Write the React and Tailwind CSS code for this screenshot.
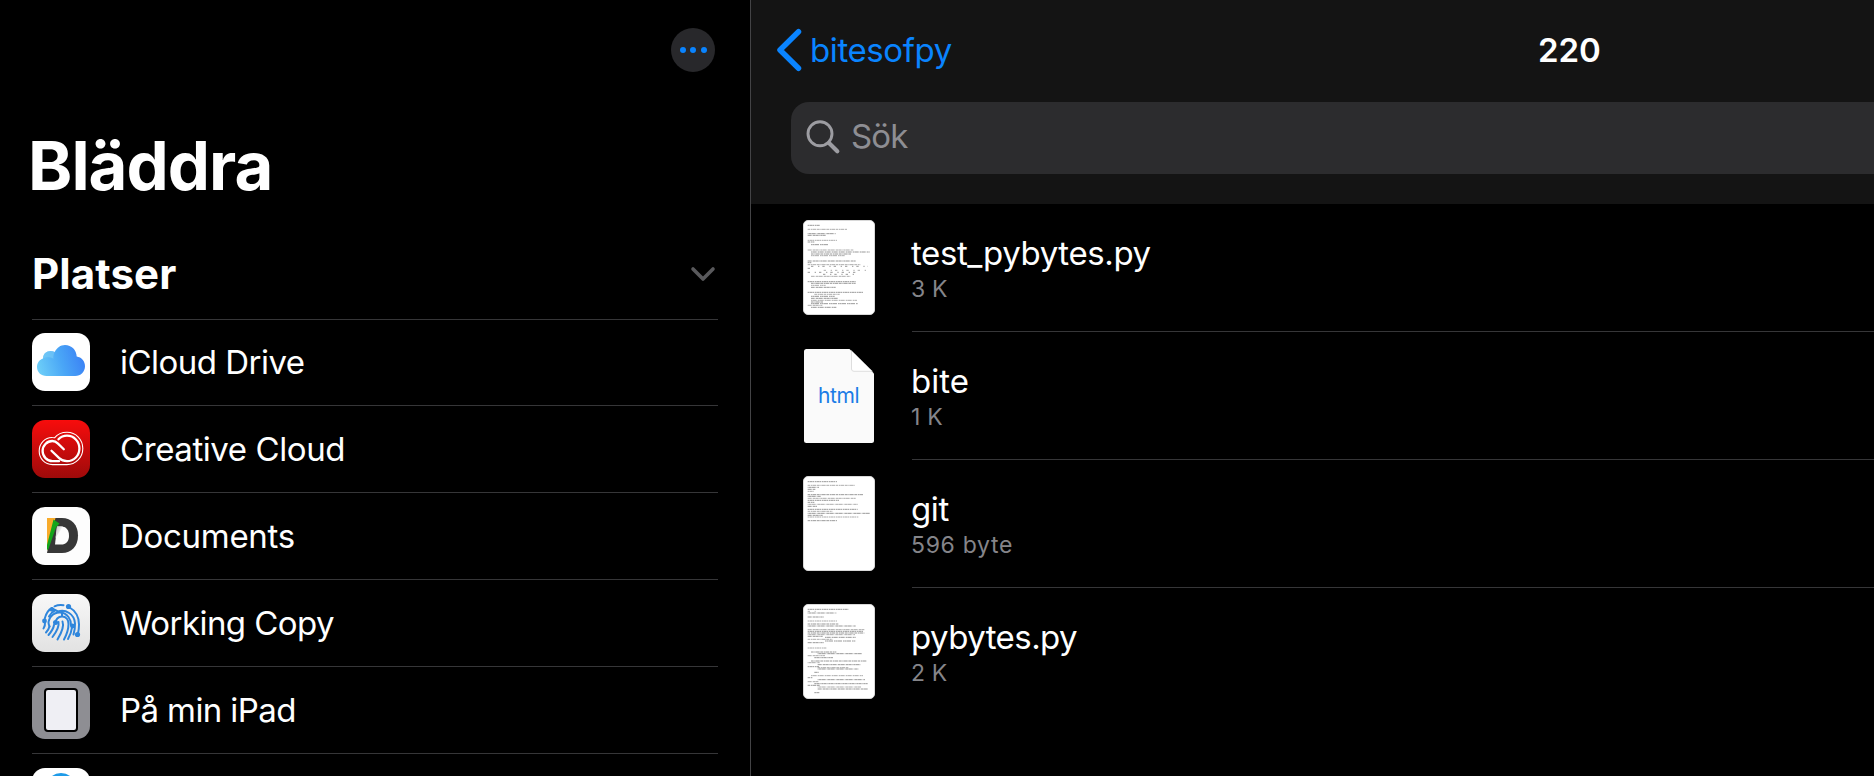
import React from 'react';

/* ---------- location icons (58 x 58) ---------- */

const ICloudIcon = () => (
  <svg viewBox="0 0 58 58" className="size-[58px]">
    <defs>
      <linearGradient id="cloud" x1="0" y1="0.6" x2="1" y2="0.4">
        <stop offset="0" stopColor="#6ccdf8" />
        <stop offset="0.5" stopColor="#4aa6f6" />
        <stop offset="1" stopColor="#3a80f5" />
      </linearGradient>
    </defs>
    <path
      d="M14.5 43C9 43 5 39 5 34c0-4.300 2.700-7.600 6-8.600C11 21 14.500 18 18.500 18c1.600 0 3 .4 4.200 1.100C24.700 14.800 28.500 12 33 12c6.500 0 11.500 5 11.700 11.600C49.500 24.300 53 28.300 53 33.200 53 38.700 48.700 43 43.200 43z"
      fill="url(#cloud)"
    />
    <path d="M11 25.400C11 21 14.500 18 18.500 18c1.600 0 3 .4 4.200 1.100-1 2-1.500 4.200-1.300 6.600-3.400-1.800-7-1.800-10.400-.3z" fill="#7fd0f5" opacity="0.5" />
  </svg>
);

const CreativeCloudIcon = () => (
  <svg viewBox="0 0 58 58" className="size-[58px]" fill="none" stroke="#fff" strokeLinecap="round" strokeLinejoin="round">
    <path
      d="M22.500 17.800C25.500 14.200 30 12.300 35 12.300 44 12.300 50.800 19.500 50.800 28.500S43.700 44.600 34.800 44.600H20.500C12.800 44.600 7.200 38.600 7.200 31 7.200 23.400 13 17.300 20.300 17.500c.8 0 1.500.1 2.200.3z"
      strokeWidth="1.100"
    />
    <path d="M26.500 19.300C28.800 16.900 31.700 15.700 35 15.700c7 0 12.400 5.700 12.400 12.800S42 41.200 35 41.200c-3.200 0-5.700-1-7.800-3L19.500 30.700" strokeWidth="2.300" />
    <path d="M31.800 29.300 26 23.600C24.300 21.900 22.500 21 20.300 21 15 21 10.600 25.500 10.600 31S15 41.200 20.500 41.200H27" strokeWidth="2.300" />
  </svg>
);

const DocumentsIcon = () => (
  <svg viewBox="0 0 58 58" className="size-[58px]">
    <defs>
      <linearGradient id="fold" x1="0" y1="0" x2="1" y2="0.6">
        <stop offset="0" stopColor="#bdbdbd" />
        <stop offset="0.8" stopColor="#fdfdfd" />
      </linearGradient>
    </defs>
    <path d="M22 11h8c9.500 0 16 6.600 16 17.500S39.500 46 30 46H15z" fill="#373737" />
    <path d="M25 19.500h4c5 0 8 3.300 8 9.200 0 5.700-3 8.800-8 8.800h-6z" fill="#fdfdfd" />
    <path d="M25 19.500h6L23.500 31z" fill="url(#fold)" />
    <path d="M15 11h8.500L17 36l-2 8z" fill="#f8ab2b" />
    <path d="M21.500 12.500 27.500 16.500 24 20.500 16.500 42 15 43V38z" fill="#14a51b" />
  </svg>
);

const WorkingCopyIcon = () => (
  <svg viewBox="0 0 58 58" className="size-[58px]" fill="none" stroke="#2f86dc" strokeWidth="2" strokeLinecap="round">
    <path d="M12.800 24.500C14 19.500 16.800 15.700 20 14M22.500 12.300C25.500 11 28.500 10.700 31.500 11.200" />
    <path d="M37 13C43 16.500 47 22.500 47 30.500c0 3-.3 6-1 9" />
    <path d="M20 14.500 26 17.500C33.500 15 42.500 20 43 29.500c.1 3.500-.3 7-1.500 11" />
    <path d="M17 22.500c1.300-2.800 3-4.600 5.500-5.700M17.500 32.500c-1.500-3-.8-7 1.500-10 4.500-5.500 13-5.500 17.500.5 2 2.700 2.600 5.500 2.500 8.500" />
    <path d="M30 17v5M23.500 29.500c-.3-4 2.800-7 6.500-7 4 0 6.500 3.200 6.500 7.500 0 5-1.500 10-4.500 15.500" />
    <path d="M30.500 27.500c1.800 4.500-.5 10.500-5 18M26.500 28c1 5-1.800 9.500-6 15" />
    <path d="M13 28c.2 2.500 0 4.500-1.500 6.500M17.500 32.500c-.5 2-1.700 4-3.500 6M22 31c-.5 3.500-2.500 6.500-5.500 10M40 33.500c-.5 4-1.700 7.500-4 11.500" />
    <g fill="#2f86dc" stroke="none">
      <circle cx="36.500" cy="12.500" r="2.600" />
      <circle cx="12.500" cy="27" r="2.400" />
      <circle cx="20" cy="15.500" r="2.300" />
      <circle cx="23.500" cy="28.500" r="2.500" />
      <circle cx="40.500" cy="32" r="2.400" />
      <circle cx="45.500" cy="40.500" r="2.600" />
    </g>
  </svg>
);

const IPadIcon = () => (
  <span className="h-[44px] w-[34px] rounded-[4px] border-2 border-black bg-[#efeff4]" />
);

const BlueDotIcon = () => <span className="mb-[18px] size-[30px] rounded-full bg-[#1e9be8]" />;

const locations = [
  { name: 'iCloud Drive', Icon: ICloudIcon, tile: 'bg-white', track: 'tracking-[-0.52px]' },
  { name: 'Creative Cloud', Icon: CreativeCloudIcon, tile: 'bg-linear-to-b from-[#f80c0c] to-[#9e0a0a]', track: 'tracking-[-0.42px]' },
  { name: 'Documents', Icon: DocumentsIcon, tile: 'bg-[#fdfdfd]', track: 'tracking-[-0.3px]' },
  { name: 'Working Copy', Icon: WorkingCopyIcon, tile: 'bg-linear-to-b from-[#f8f8f8] to-[#e2e2e2]', track: 'tracking-[-0.55px]' },
  { name: 'På min iPad', Icon: IPadIcon, tile: 'bg-[#8e8e93]', track: 'tracking-[-0.6px]' },
  { name: '', Icon: BlueDotIcon, tile: 'bg-white', track: '' },
];

/* ---------- file thumbnails: [y, x1, x2, sparse] in thirds of a pixel ---------- */

const testLines = [
  [16, 14, 50], [28, 14, 132], [41, 14, 98], [46, 14, 68], [61, 14, 102], [66, 14, 34], [74, 24, 75],
  [90, 14, 152], [96, 24, 200], [102, 24, 145], [107, 24, 125], [123, 14, 158], [128, 14, 25],
  [134, 14, 172], [139, 24, 195, 1], [145, 14, 28, 1], [151, 62, 195, 1], [157, 14, 160, 1], [163, 60, 155, 1], [169, 24, 142],
  [185, 14, 158], [190, 24, 158], [196, 24, 68], [202, 24, 98], [217, 14, 180], [223, 34, 110], [229, 24, 95],
  [235, 24, 105], [241, 24, 162], [246, 24, 60], [251, 24, 165], [256, 14, 58], [262, 24, 100],
];
const gitLines = [
  [17, 14, 102], [28, 14, 156], [34, 14, 48], [40, 14, 38], [46, 14, 32], [56, 14, 180], [61, 14, 54], [67, 14, 158],
  [73, 14, 108], [79, 14, 34], [85, 14, 164], [91, 14, 42], [100, 14, 164], [106, 14, 88], [112, 14, 202], [118, 14, 60],
  [123, 14, 166], [134, 14, 102],
];
const pyLines = [
  [16, 14, 136], [22, 14, 38, 1], [27, 14, 100], [39, 14, 62], [51, 14, 102], [60, 14, 108], [66, 14, 158],
  [77, 14, 184], [82, 14, 182], [87, 14, 184], [92, 14, 156], [97, 14, 60], [100, 66, 158], [106, 14, 88], [111, 66, 158], [116, 14, 62],
  [132, 14, 70], [144, 24, 100], [149, 44, 178], [155, 14, 66], [161, 34, 90], [171, 24, 190], [176, 14, 50], [182, 44, 172],
  [188, 14, 48], [191, 44, 138], [195, 44, 166], [205, 34, 48], [215, 24, 180], [221, 14, 28], [227, 44, 186], [233, 14, 46],
  [239, 34, 194], [244, 14, 52], [249, 44, 174], [255, 44, 196], [266, 34, 50],
];

const dashes = ['5 1 9 1 3 2', '8 2 4 1 11 2', '3 1 6 1 13 3', '10 1 2 2 7 1'];

const TextThumb = ({ lines }) => (
  <div className="mt-4 h-[95px] w-[72px] shrink-0 rounded-[5px] border border-[#d8d8d8] bg-white">
    <svg viewBox="3 3 210 279" className="h-[93px] w-[70px]">
      {lines.map(([y, x1, x2, sparse], i) => (
        <line
          key={i}
          x1={x1}
          x2={x2}
          y1={y}
          y2={y}
          stroke={i % 3 === 1 ? '#777' : '#555'}
          strokeWidth="1.8"
          strokeDasharray={sparse ? '7 14 4 9' : dashes[i % 4]}
        />
      ))}
    </svg>
  </div>
);

const HtmlThumb = () => (
  <div className="mt-[17px] grid h-[94px] w-[72px] shrink-0 place-items-center">
    <svg viewBox="0 0 70 94" className="col-start-1 row-start-1 h-[94px] w-[70px]">
      <path d="M2.500 0H45.500L70 24.500V91.500Q70 94 67.500 94H2.500Q0 94 0 91.500V2.500Q0 0 2.500 0z" fill="#fafafa" />
      <path d="M47.500 1.500V20Q47.500 22.300 50 22.300H68.500" fill="#fff" stroke="#d6d6d6" strokeWidth="0.8" />
    </svg>
    <span className="col-start-1 row-start-1 -ml-px text-[21px] leading-[26px] tracking-[-0.4px] text-[#1a7ce6]">html</span>
  </div>
);

const files = [
  { name: 'test_pybytes.py', size: '3 K', thumb: <TextThumb lines={testLines} />, track: 'tracking-[-0.4px]', sub: 'tracking-[0.1px]' },
  { name: 'bite', size: '1 K', thumb: <HtmlThumb />, track: 'tracking-normal', sub: 'tracking-[0.2px]' },
  { name: 'git', size: '596 byte', thumb: <TextThumb lines={gitLines} />, track: 'tracking-[-0.4px]', sub: 'tracking-[0.68px]' },
  { name: 'pybytes.py', size: '2 K', thumb: <TextThumb lines={pyLines} />, track: 'tracking-[-0.55px]', sub: 'tracking-[0.1px]' },
];

/* ---------- panels ---------- */

const Sidebar = () => (
  <aside className="w-[751px] shrink-0 border-r border-[#434345] pr-8 pl-8">
    <div className="flex h-[126px] items-start justify-end pt-7 pr-[3px]">
      <button className="flex size-11 items-center justify-center gap-[4.5px] rounded-full bg-[#28282b]">
        <span className="size-[6px] rounded-full bg-[#0a84ff]" />
        <span className="size-[6px] rounded-full bg-[#0a84ff]" />
        <span className="size-[6px] rounded-full bg-[#0a84ff]" />
      </button>
    </div>
    <h1 className="-ml-1 h-20 text-[67px] leading-[79px] font-bold tracking-[-0.95px]">Bläddra</h1>
    <div className="flex h-[114px] items-center justify-between border-b border-[#363638] pt-[22px]">
      <h2 className="text-[42px] leading-[50px] font-bold tracking-[0.1px]">Platser</h2>
      <svg viewBox="0 0 26 16" className="mr-[2px] h-4 w-[26px]" fill="none" stroke="#59595c" strokeWidth="3.600" strokeLinecap="round" strokeLinejoin="round">
        <path d="M3 3 13 13 23 3" />
      </svg>
    </div>
    <ul className="-mt-px">
      {locations.map(({ name, Icon, tile, track }, i) => (
        <li key={i} className="flex h-[87px] items-center gap-[30px] border-b border-[#363638]">
          <span className={`flex size-[58px] shrink-0 items-center justify-center overflow-hidden rounded-[13px] ${tile}`}>
            <Icon />
          </span>
          <span className={`text-[33px] leading-10 ${track}`}>{name}</span>
        </li>
      ))}
    </ul>
  </aside>
);

const Browser = () => (
  <main className="min-w-0 grow">
    <header className="h-[204px] bg-[#141414]">
      <div className="grid h-[102px] grid-cols-[766px_1fr] pb-[2px]">
        <button className="flex items-center self-center pl-[25px] text-[#0a84ff]">
          <svg viewBox="0 0 26 44" className="h-11 w-[26px]" fill="none" stroke="currentColor" strokeWidth="5.500" strokeLinecap="round" strokeLinejoin="round">
            <path d="M22.500 3.700 4 22 22.500 40.300" />
          </svg>
          <span className="ml-[8px] text-[33px] leading-10 tracking-[-0.4px]">bitesofpy</span>
        </button>
        <h3 className="self-center pl-[21px] text-[33px] leading-10 font-semibold">220</h3>
      </div>
      <div className="ml-10 flex h-[72px] items-center rounded-l-[18px] bg-[#2c2c2e] pl-[14px] text-[#8e8e93]">
        <svg viewBox="0 0 36 36" className="size-9" fill="none" stroke="#9d9da2" strokeLinecap="round">
          <circle cx="15" cy="13.700" r="12" strokeWidth="2.900" />
          <path d="M24 23 32.300 31.200" strokeWidth="4.200" />
        </svg>
        <span className="ml-[10px] pb-[4px] text-[33px] leading-10 tracking-[-0.8px]">Sök</span>
      </div>
    </header>
    <ul className="pl-[52px]">
      {files.map(({ name, size, thumb, track, sub }, i) => (
        <li key={name} className="flex h-32 gap-[37px]">
          {thumb}
          <div className={`grow ${i < files.length - 1 ? 'border-b border-[#363638]' : ''}`}>
            <p className={`-ml-px pt-[29px] text-[33px] leading-10 ${track}`}>{name}</p>
            <p className={`-ml-px mt-[2px] text-[23px] leading-7 text-[#85858a] ${sub}`}>{size}</p>
          </div>
        </li>
      ))}
    </ul>
  </main>
);

export default function App() {
  return (
    <div className="flex h-[776px] w-[1874px] overflow-hidden bg-black font-[Inter,sans-serif] text-white">
      <Sidebar />
      <Browser />
    </div>
  );
}
